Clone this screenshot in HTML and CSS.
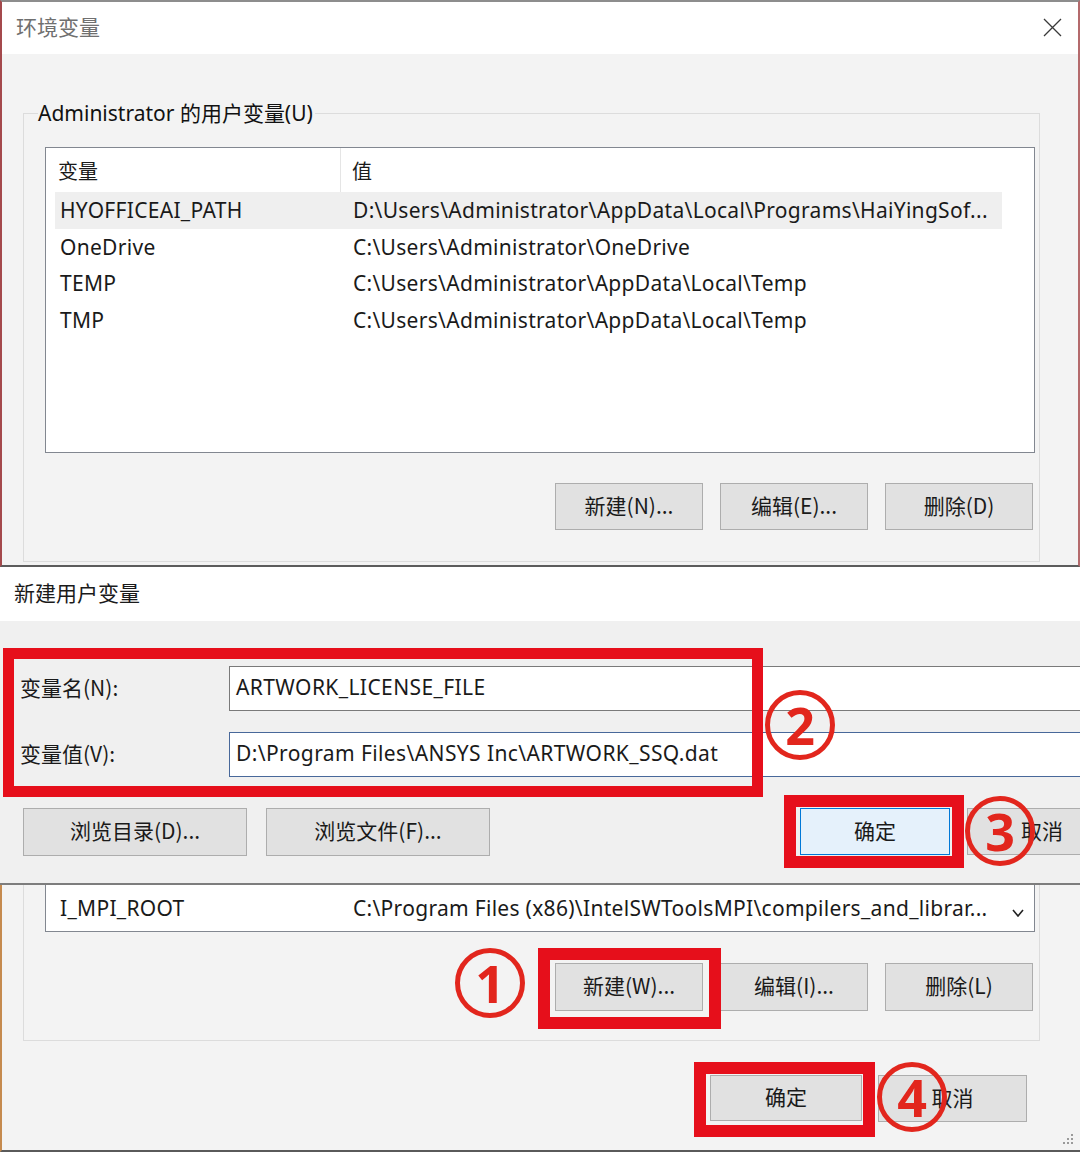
FILE: index.html
```html
<!DOCTYPE html>
<html lang="zh-CN">
<head>
<meta charset="utf-8">
<title>环境变量</title>
<link rel="stylesheet" href="styles.css">
</head>
<body>
<div class="screen">
  <section class="dlg dlg-top">
    <header class="titlebar">
      <span class="title muted">环境变量</span>
      <svg class="close" width="19" height="19" viewBox="0 0 19 19"><path d="M1 1 L18 18 M18 1 L1 18" stroke="#3a3a3a" stroke-width="1.3" fill="none"/></svg>
    </header>
    <div class="body">
      <fieldset class="group">
        <legend>Administrator 的用户变量(U)</legend>
        <div class="list">
          <div class="list-head">
            <div class="hcol1">变量</div>
            <div class="hcol2">值</div>
          </div>
          <div class="row sel"><div class="c1">HYOFFICEAI_PATH</div><div class="c2">D:\Users\Administrator\AppData\Local\Programs\HaiYingSof...</div></div>
          <div class="row"><div class="c1">OneDrive</div><div class="c2">C:\Users\Administrator\OneDrive</div></div>
          <div class="row"><div class="c1">TEMP</div><div class="c2">C:\Users\Administrator\AppData\Local\Temp</div></div>
          <div class="row"><div class="c1">TMP</div><div class="c2">C:\Users\Administrator\AppData\Local\Temp</div></div>
        </div>
        <div class="btnrow">
          <button class="btn">新建(N)...</button>
          <button class="btn">编辑(E)...</button>
          <button class="btn">删除(D)</button>
        </div>
      </fieldset>
    </div>
  </section>

  <section class="dlg dlg-new">
    <header class="titlebar titlebar-new">
      <span class="title">新建用户变量</span>
    </header>
    <div class="body body-new">
      <div class="field">
        <label class="flabel">变量名(N):</label>
        <div class="input">ARTWORK_LICENSE_FILE</div>
      </div>
      <div class="field field2">
        <label class="flabel">变量值(V):</label>
        <div class="input focus">D:\Program Files\ANSYS Inc\ARTWORK_SSQ.dat</div>
      </div>
      <div class="newbtns">
        <button class="btn wide">浏览目录(D)...</button>
        <button class="btn wide">浏览文件(F)...</button>
        <button class="btn default ok-new">确定</button>
        <button class="btn cancel-new">取消</button>
      </div>
    </div>
  </section>

  <section class="dlg dlg-bottom">
    <div class="group2">
      <div class="list2">
        <div class="row2"><div class="c1">I_MPI_ROOT</div><div class="c2">C:\Program Files (x86)\IntelSWToolsMPI\compilers_and_librar...</div>
          <svg class="chev" width="12" height="8" viewBox="0 0 12 8"><path d="M1 1 L6 7 L11 1" stroke="#222" stroke-width="1.6" fill="none"/></svg>
        </div>
      </div>
      <div class="btnrow btnrow2">
        <button class="btn">新建(W)...</button>
        <button class="btn">编辑(I)...</button>
        <button class="btn">删除(L)</button>
      </div>
    </div>
    <div class="footer">
      <button class="btn okb">确定</button>
      <button class="btn cancelb">取消</button>
    </div>
    <svg class="grip" width="14" height="14" viewBox="0 0 14 14">
      <rect x="11" y="2" width="2" height="2" fill="#9a9a9a"/>
      <rect x="7" y="6" width="2" height="2" fill="#9a9a9a"/>
      <rect x="11" y="6" width="2" height="2" fill="#9a9a9a"/>
      <rect x="3" y="10" width="2" height="2" fill="#9a9a9a"/>
      <rect x="7" y="10" width="2" height="2" fill="#9a9a9a"/>
      <rect x="11" y="10" width="2" height="2" fill="#9a9a9a"/>
    </svg>
  </section>

  <div class="mark box2"></div>
  <div class="mark box3"></div>
  <div class="mark box1"></div>
  <div class="mark box4"></div>
  <div class="num n2">2</div>
  <div class="num n3">3</div>
  <div class="num n1">1</div>
  <div class="num n4">4</div>
</div>
</body>
</html>
```
FILE: styles.css
```css
* { box-sizing: border-box; }
html, body { margin: 0; padding: 0; background: #fff; }
body {
  font-family: "Noto Sans", "Noto Sans CJK SC", sans-serif;
  color: #1a1a1a;
}
.screen {
  position: relative;
  width: 1080px;
  height: 1152px;
  overflow: hidden;
  display: flex;
  flex-direction: column;
}
.dlg { overflow: hidden; }

/* top dialog */
.dlg-top {
  height: 567px;
  flex: none;
  display: flex;
  flex-direction: column;
  border-top: 2px solid #8d8d8d;
  border-left: 2px solid #a4494c;
  border-right: 2px solid #b46a6c;
  border-bottom: 2px solid #5c5c5c;
  background: #f3f3f3;
}
.titlebar {
  height: 52px;
  flex: none;
  background: #fff;
  display: flex;
  align-items: center;
  justify-content: space-between;
  padding: 0 16px 0 14px;
}
.title { font-size: 21px; line-height: 24px; margin-top: -5px; font-family: "Noto Sans CJK SC", sans-serif; }
.muted { color: #707070; }
.close { display: block; margin-top: -1px; }

.body { flex: 1; display: flex; padding: 47px 38px 3px 21px; }
.group {
  flex: 1;
  margin: 0;
  border: 1px solid #dcdcdc;
  padding: 22px 4px 0 14px;
  min-width: 0;
}
.group legend {
  padding: 0 2px 0 0;
  font-size: 21px;
  line-height: 24px;
  color: #111;
}
.list {
  margin-left: 7px;
  height: 306px;
  border: 1px solid #828790;
  background: #fff;
}
.list-head {
  height: 44px;
  display: flex;
  align-items: center;
  font-size: 20px;
  font-family: "Noto Sans CJK SC", sans-serif;
}
.hcol1 { width: 295px; padding-left: 12px; height: 100%; display: flex; align-items: center; border-right: 1px solid #e5e5e5; }
.hcol2 { padding-left: 11px; }
.row {
  margin-left: 9px;
  width: 947px;
  height: 36.5px;
  display: flex;
  align-items: center;
  font-size: 21px;
  letter-spacing: 0.3px;
  white-space: nowrap;
}
.row.sel { background: #efefef; }
.c1 { width: 298px; padding-left: 5px; flex: none; }
.c2 { flex: none; }

.btnrow { display: flex; justify-content: flex-end; gap: 17px; margin-top: 30px; padding-right: 2px; }
.btn {
  width: 148px;
  height: 47px;
  background: #e1e1e1;
  border: 1px solid #adadad;
  font-family: "Noto Sans CJK SC", "Noto Sans", sans-serif;
  font-size: 21px;
  color: #1a1a1a;
  padding: 0 0 4px 0;
  flex: none;
}

/* new variable dialog */
.dlg-new {
  height: 318px;
  flex: none;
  display: flex;
  flex-direction: column;
  background: #f0f0f0;
  border-bottom: 2px solid #7d7d7d;
}
.titlebar-new { height: 54px; padding-left: 14px; }
.titlebar-new .title { color: #1a1a1a; }
.body-new { flex: 1; display: flex; flex-direction: column; padding: 45px 0 0 20px; }
.field { display: flex; align-items: center; height: 45px; }
.field2 { margin-top: 21px; }
.flabel { width: 209px; flex: none; font-size: 21px; margin-top: -3px; font-family: "Noto Sans CJK SC", sans-serif; }
.input {
  flex: none;
  width: 900px;
  height: 45px;
  background: #fff;
  border: 1px solid #7a7a7a;
  font-size: 21px;
  line-height: 41px;
  padding-left: 6px;
  white-space: nowrap;
  letter-spacing: 0.4px;
}
.input.focus { border-color: #48689a; }
.newbtns { display: flex; margin-top: 31px; padding-left: 3px; }
.btn.wide { width: 224px; height: 48px; }
.btn.wide + .btn.wide { margin-left: 19px; }
.ok-new { margin-left: 310px; width: 150px; height: 47px; }
.btn.default { background: #e5f1fb; border-color: #0078d7; }
.cancel-new { margin-left: 17px; width: 150px; height: 47px; }

/* bottom part */
.dlg-bottom {
  flex: 1;
  position: relative;
  background: #f3f3f3;
  border-left: 2px solid #c58a4e;
  border-bottom: 2px solid #5a5a5a;
  display: flex;
  flex-direction: column;
}
.group2 {
  margin-left: 21px;
  width: 1017px;
  border: 1px solid #dcdcdc;
  border-top: none;
  padding: 0 4px 29px 21px;
}
.list2 {
  height: 47px;
  border: 1px solid #828790;
  border-top: none;
  background: #fff;
}
.row2 {
  position: relative;
  height: 46px;
  margin-left: 9px;
  display: flex;
  align-items: center;
  font-size: 21px;
  letter-spacing: 0.3px;
  white-space: nowrap;
}
.chev { position: absolute; left: 957px; top: 24px; }
.btnrow2 { margin-top: 31px; }
.btnrow2 .btn { height: 48px; }
.footer { display: flex; justify-content: flex-end; gap: 16px; margin-top: 34px; padding-right: 53px; }
.okb { width: 152px; height: 46px; }
.cancelb { width: 149px; height: 47px; }
.grip { position: absolute; right: 6px; bottom: 4px; }

/* annotations */
.mark { position: absolute; border: 12px solid #e60f1b; }
.box2 { left: 3px; top: 648px; width: 760px; height: 149px; border-width: 11px; }
.box3 { left: 784px; top: 795px; width: 180px; height: 73px; }
.box1 { left: 538px; top: 948px; width: 183px; height: 81px; }
.box4 { left: 694px; top: 1062px; width: 181px; height: 75px; }
.num {
  position: absolute;
  width: 70px;
  height: 70px;
  border: 5px solid #e2261d;
  border-radius: 50%;
  color: #e2261d;
  font-family: "Noto Sans", sans-serif;
  font-weight: 700;
  font-size: 52px;
  line-height: 60px;
  text-align: center;
}
.n2 { left: 765px; top: 690px; }
.n3 { left: 965px; top: 796px; }
.n1 { left: 455px; top: 948px; }
.n4 { left: 877px; top: 1062px; }
```
